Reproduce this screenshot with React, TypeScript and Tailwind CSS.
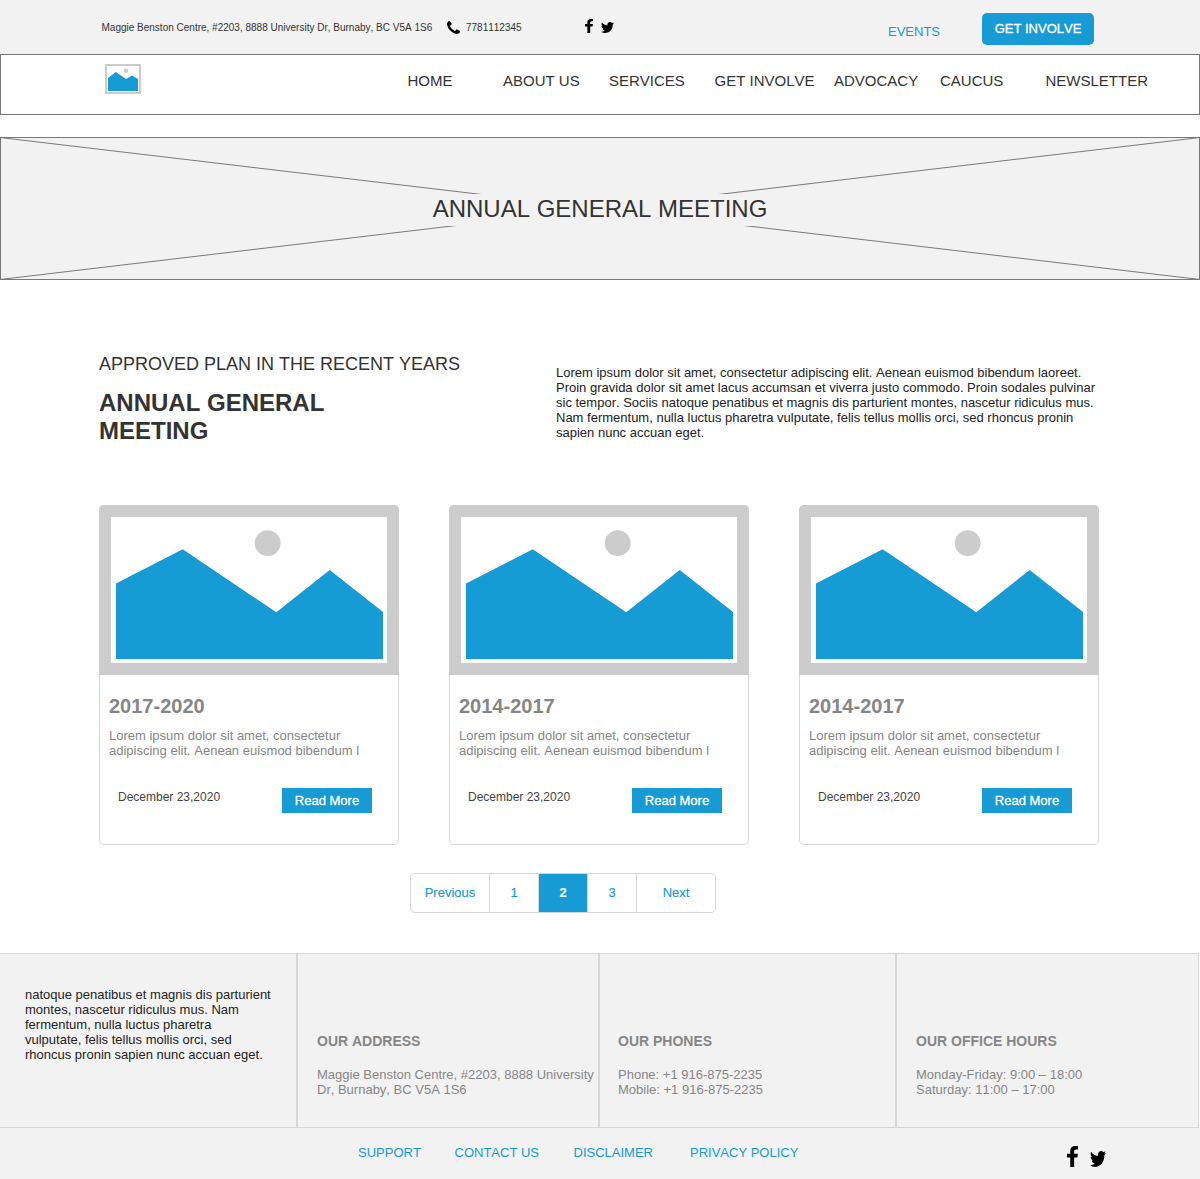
import React from "react";

function FacebookIcon({ className }: { className: string }) {
  return (
    <svg className={className} viewBox="479 0 864 1664" preserveAspectRatio="none" fill="#000">
      <path d="M1343 12v264h-157q-86 0-116 36t-30 108v189h293l-39 296h-254v759h-306v-759h-255v-296h255v-218q0-186 104-288.5t277-102.5q147 0 228 12z" />
    </svg>
  );
}

function TwitterIcon({ className }: { className: string }) {
  return (
    <svg className={className} viewBox="108 256 1576 1280" preserveAspectRatio="none" fill="#000">
      <path d="M1684 408q-67 98-162 167 1 14 1 42 0 130-38 259.5t-115.5 248.5-184.5 210.5-258 146-323 54.5q-271 0-496-145 35 4 78 4 225 0 401-138-105-2-188-64.5t-114-159.5q33 5 61 5 43 0 85-11-112-23-185.5-111.5t-73.5-205.5v-4q68 38 146 41-66-44-105-115t-39-154q0-88 44-163 121 149 294.5 238.5t371.5 99.5q-8-38-8-74 0-134 94.5-228.5t228.5-94.5q140 0 236 102 109-21 205-78-37 115-142 178 93-10 186-50z" />
    </svg>
  );
}

function PhoneIcon({ className }: { className: string }) {
  return (
    <svg className={className} viewBox="192 128 1408 1408" fill="#000">
      <path d="M1600 1240q0 27-10 70.5t-21 68.5q-21 50-122 106-94 51-186 51-27 0-53-3.5t-57.5-12.5-47-14.5-55.5-20.5-49-18q-98-35-175-83-127-79-264-216t-216-264q-48-77-83-175-3-9-18-49t-20.5-55.5-14.5-47-12.5-57.5-3.5-53q0-92 51-186 56-101 106-122 25-11 68.5-21t70.5-10q14 0 21 3 18 6 53 76 11 19 30 54t35 63.5 31 53.5q3 4 17.5 25t21.5 35.5 7 28.5q0 20-28.5 50t-62 55-62 53-28.5 46q0 9 5 22.5t8.5 20.5 14 24 11.5 19q76 137 174 235t235 174q2 1 19 11.5t24 14 20.5 8.5 22.5 5q18 0 46-28.5t53-62 55-62 50-28.5q14 0 28.5 7t35.5 21.5 25 17.5q25 15 53.5 31t63.5 35 54 30q70 35 76 53 3 7 3 21z" />
    </svg>
  );
}

function Logo() {
  return (
    <svg className="ml-[104px] mt-[9px] h-[30px] w-9 shrink-0" viewBox="0 0 36 30">
      <rect x="1" y="1" width="34" height="28" fill="#fff" stroke="#ccc" strokeWidth="2" />
      <circle cx="21" cy="6.7" r="2.3" fill="#ccc" />
      <path d="M3 14L10.7 8L21 15L27 11.5L33 15V27H3Z" fill="#169bd5" />
    </svg>
  );
}

function CardPicture() {
  return (
    <svg className="block h-[170px] w-[300px]" viewBox="0 0 300 170">
      <rect width="300" height="170" fill="#ccc" />
      <rect x="12" y="12" width="276" height="146" fill="#fff" />
      <circle cx="168.7" cy="38.2" r="12.9" fill="#ccc" />
      <path d="M17 78.5L83.7 44.3L177.3 107.3L230.7 65L284 107V154H17Z" fill="#169bd5" />
    </svg>
  );
}

function PlanCard({ title }: { title: string }) {
  return (
    <article className="h-[340px] w-[300px] overflow-hidden rounded-[5px] bg-white shadow-[inset_0_0_0_1px_#d7d7d7]">
      <CardPicture />
      <h3 className="mt-5 ml-[10px] h-[23px] text-[20px] leading-[23px] font-bold text-[#868686]">{title}</h3>
      <p className="mt-[10px] ml-[10px] w-[262px] text-[13px] leading-[15px] text-[#868686]">
        Lorem ipsum dolor sit amet, consectetur adipiscing elit. Aenean euismod bibendum l
      </p>
      <div className="mt-[30px] ml-[19px] flex w-[254px] items-start justify-between">
        <span className="mt-[2px] text-[12px] leading-[14px] text-[#444]">December 23,2020</span>
        <button className="h-[25px] w-[90px] bg-[#169bd5] text-center text-[13px] leading-[25px] text-white [-webkit-text-stroke:0.3px_#fff]">
          Read More
        </button>
      </div>
    </article>
  );
}

const navItems = [
  { label: "HOME", width: "w-[95.5px]" },
  { label: "ABOUT US", width: "w-[106px]" },
  { label: "SERVICES", width: "w-[105.5px]" },
  { label: "GET INVOLVE", width: "w-[119.5px]" },
  { label: "ADVOCACY", width: "w-[106px]" },
  { label: "CAUCUS", width: "w-[105.5px]" },
  { label: "NEWSLETTER", width: "w-[110px]" },
];

const plans = ["2017-2020", "2014-2017", "2014-2017"];

function FooterColumn({ title, lines, className }: { title: string; lines: string[]; className: string }) {
  return (
    <section className={className}>
      <h4 className="mt-[79px] text-[14px] leading-4 font-bold text-[#868686]">{title}</h4>
      <div className="mt-[18px] text-[13px] leading-[15px] whitespace-nowrap text-[#868686]">
        {lines.map((line) => (
          <p key={line}>{line}</p>
        ))}
      </div>
    </section>
  );
}

export default function App() {
  return (
    <div className="h-[1179px] w-[1200px] overflow-hidden bg-white font-['Liberation_Sans',Arial,sans-serif] text-[#333] [font-kerning:none]">
      <header>
        <div className="flex h-[54px] items-start bg-[#f2f2f2]">
          <span className="mt-[22px] ml-[101.5px] w-[345.5px] text-[10px] leading-[11px] whitespace-nowrap">
            Maggie Benston Centre, #2203, 8888 University Dr, Burnaby, BC V5A 1S6
          </span>
          <PhoneIcon className="mt-[21px] h-[13px] w-[13px]" />
          <span className="mt-[22px] ml-[6px] w-[119px] text-[10px] leading-[11px]">7781112345</span>
          <FacebookIcon className="mt-[19px] h-[14px] w-2" />
          <TwitterIcon className="mt-[22px] ml-2 h-[11px] w-[13px]" />
          <a className="mt-6 ml-[274px] w-[94px] text-[13px] leading-[15px] text-[#169bd5]">EVENTS</a>
          <button className="mt-[13px] h-8 w-[112px] rounded-[5px] bg-[#169bd5] pb-px text-[13px] leading-[31px] text-white [-webkit-text-stroke:0.3px_#fff]">
            GET INVOLVE
          </button>
        </div>
        <nav className="flex h-[61px] items-start border border-[#797979] bg-white">
          <Logo />
          <div className="mt-[17px] ml-[266.5px] flex text-[15px] leading-[17px] whitespace-nowrap">
            {navItems.map((item) => (
              <a key={item.label} className={item.width}>
                {item.label}
              </a>
            ))}
          </div>
        </nav>
      </header>

      <section className="relative mt-[22px] flex h-[143px] justify-center border border-[#797979] bg-[#f2f2f2]">
        <svg className="absolute -top-px -left-px h-[143px] w-[1200px]" viewBox="0 0 1200 143">
          <path d="M0 0.5L1200 142.5M0 142.5L1200 0.5" stroke="#797979" strokeWidth="1" />
        </svg>
        <h1 className="relative mt-14 h-8 w-[340px] bg-[#f2f2f2] pt-px text-center text-[24px] leading-[27px] whitespace-nowrap">
          ANNUAL GENERAL MEETING
        </h1>
      </section>

      <main>
        <div className="flex h-[225px] items-start pt-[74px] pl-[99px]">
          <div className="w-[457px]">
            <p className="text-[18px] leading-5">APPROVED PLAN IN THE RECENT YEARS</p>
            <h2 className="mt-[15px] w-[260px] text-[24px] leading-[28px] font-bold">ANNUAL GENERAL MEETING</h2>
          </div>
          <p className="mt-[11px] w-[545px] text-[13px] leading-[15px] text-[#222]">
            Lorem ipsum dolor sit amet, consectetur adipiscing elit. Aenean euismod bibendum laoreet. Proin gravida
            dolor sit amet lacus accumsan et viverra justo commodo. Proin sodales pulvinar sic tempor. Sociis natoque
            penatibus et magnis dis parturient montes, nascetur ridiculus mus. Nam fermentum, nulla luctus pharetra
            vulputate, felis tellus mollis orci, sed rhoncus pronin sapien nunc accuan eget.
          </p>
        </div>

        <div className="ml-[99px] flex gap-[50px]">
          {plans.map((plan, i) => (
            <PlanCard key={i} title={plan} />
          ))}
        </div>

        <div className="mt-7 ml-[410px] flex h-10 w-[306px] overflow-hidden rounded-[5px] border border-[#d7d7d7] text-center text-[13px] leading-[37px] text-[#169bd5] [-webkit-text-stroke:0.15px_currentColor]">
          <a className="w-[79px] border-r border-[#d7d7d7]">Previous</a>
          <a className="w-[49px] border-r border-[#d7d7d7]">1</a>
          <a className="w-[49px] border-r border-[#d7d7d7] bg-[#169bd5] font-bold text-white">2</a>
          <a className="w-[49px] border-r border-[#d7d7d7]">3</a>
          <a className="w-[78px]">Next</a>
        </div>
      </main>

      <footer className="mt-10">
        <div className="flex h-[175px] w-[1199px] border-y border-r border-[#d7d7d7] bg-[#f2f2f2]">
          <div className="w-[298px] border-r-2 border-[#d7d7d7] pt-[33px] pl-[25px]">
            <p className="w-[250px] text-[13px] leading-[15px] text-[#222]">
              natoque penatibus et magnis dis parturient montes, nascetur ridiculus mus. Nam fermentum, nulla luctus
              pharetra
              <br />
              vulputate, felis tellus mollis orci, sed
              <br />
              rhoncus pronin sapien nunc accuan eget.
            </p>
          </div>
          <FooterColumn
            className="w-[302px] border-r-2 border-[#d7d7d7] pl-[19px]"
            title="OUR ADDRESS"
            lines={["Maggie Benston Centre, #2203, 8888 University", "Dr, Burnaby, BC V5A 1S6"]}
          />
          <FooterColumn
            className="w-[297px] border-r-2 border-[#d7d7d7] pl-[18px]"
            title="OUR PHONES"
            lines={["Phone: +1 916-875-2235", "Mobile: +1 916-875-2235"]}
          />
          <FooterColumn
            className="w-[301px] pl-[19px]"
            title="OUR OFFICE HOURS"
            lines={["Monday-Friday: 9:00 – 18:00", "Saturday: 11:00 – 17:00"]}
          />
        </div>
        <div className="flex h-[51px] items-start bg-[#f2f2f2] pl-[358px] text-[13px] leading-[15px] text-[#169bd5]">
          <a className="mt-[17px] w-[96.5px]">SUPPORT</a>
          <a className="mt-[17px] w-[119px]">CONTACT US</a>
          <a className="mt-[17px] w-[116.5px]">DISCLAIMER</a>
          <a className="mt-[17px] w-[377px]">PRIVACY POLICY</a>
          <FacebookIcon className="mt-[18px] h-[21px] w-[11px]" />
          <TwitterIcon className="mt-[23px] ml-3 h-4 w-4" />
        </div>
      </footer>
    </div>
  );
}
